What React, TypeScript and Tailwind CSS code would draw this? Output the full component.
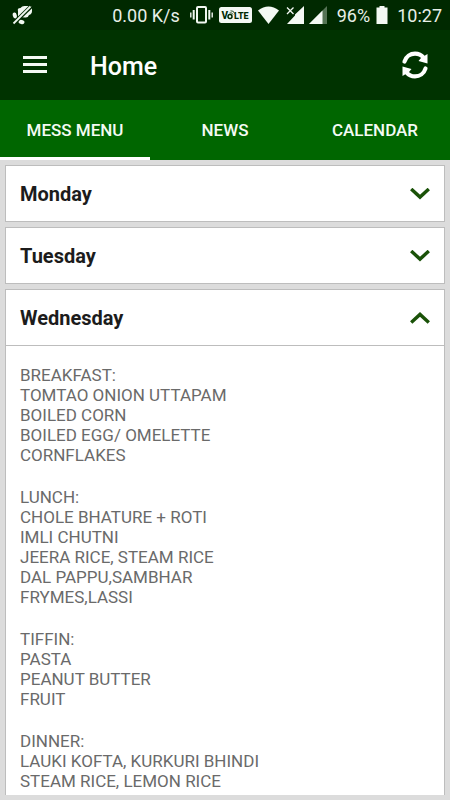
import { useState } from "react";

const tabs = ["MESS MENU", "NEWS", "CALENDAR"];

const meals = [
  { name: "BREAKFAST:", items: ["TOMTAO ONION UTTAPAM", "BOILED CORN", "BOILED EGG/ OMELETTE", "CORNFLAKES"] },
  { name: "LUNCH:", items: ["CHOLE BHATURE + ROTI", "IMLI CHUTNI", "JEERA RICE, STEAM RICE", "DAL PAPPU,SAMBHAR", "FRYMES,LASSI"] },
  { name: "TIFFIN:", items: ["PASTA", "PEANUT BUTTER", "FRUIT"] },
  { name: "DINNER:", items: ["LAUKI KOFTA, KURKURI BHINDI", "STEAM RICE, LEMON RICE"] },
];

const days = ["Monday", "Tuesday", "Wednesday"];

function StatusBar() {
  return (
    <div className="flex h-[30px] shrink-0 items-center bg-[#002900] pr-2 pl-3 text-lg leading-5 text-[#e8efe8]">
      <svg className="h-5 w-[21px]" viewBox="0 0 21 20" fill="#f1f7f1">
        <path d="M6 6Q5 3 8.500 3Q10 .8 13 1H20V6Q20 9 17 10Q16 13 13 12.500L6 12Z" />
        <ellipse cx="2.800" cy="10.500" rx="2" ry="3" transform="rotate(-15 2.800 10.500)" />
        <ellipse cx="9.500" cy="17" rx="3" ry="2" transform="rotate(15 9.500 17)" />
        <path d="M1 19 19.500 1" stroke="#002900" strokeWidth="4" />
        <path d="M1.500 18.500 18.500 1.500" stroke="#f1f7f1" strokeWidth="1.800" />
      </svg>
      <span className="ml-auto pt-px">0.00 K/s</span>
      <svg className="ml-[10px] h-5 w-[23px]" viewBox="0 0 23 20" fill="none" stroke="#f1f7f1">
        <rect x="7" y="2" width="9" height="15.500" rx="1" strokeWidth="2" />
        <path d="M3.700 5v9.500M19.300 5v9.500" strokeWidth="2" />
        <path d="M.8 7.500v5M22.200 7.500v5" strokeWidth="1.400" />
      </svg>
      <svg className="ml-[6px] h-5 w-[33px]" viewBox="0 0 33 20">
        <rect y="2" width="33" height="16" rx="2.500" fill="#f4f9f4" />
        <text x="2.500" y="14" fontFamily="Roboto, sans-serif" fontSize="10" fontWeight="800" fill="#002900">V</text>
        <circle cx="11" cy="11.500" r="2" fill="none" stroke="#002900" strokeWidth="1.500" />
        <path d="M10.500 8Q13 7 14 9.500M11.500 5.800Q15 5.500 15.500 8.500" fill="none" stroke="#002900" strokeWidth=".8" />
        <text x="15" y="14" fontFamily="Roboto, sans-serif" fontSize="9" fontWeight="800" fill="#002900">LTE</text>
      </svg>
      <svg className="ml-[6px] h-5 w-[21px]" viewBox="0 0 21 20" fill="#f4f9f4">
        <path d="M0 5.500Q10.500-2.500 21 5.500L10.500 19Z" />
      </svg>
      <svg className="ml-[7px] h-5 w-[18px]" viewBox="0 0 18 20" fill="#f4f9f4">
        <path d="M18 1V19H1L9 10.500V9.500Z" />
        <path d="M1 2.500 7.500 9M7.500 2.500 1 9" stroke="#f4f9f4" strokeWidth="1.300" />
      </svg>
      <svg className="ml-[5px] h-5 w-[18px]" viewBox="0 0 18 20">
        <path d="M18 1V19H0Z" fill="#557355" />
        <path d="M13.500 5.500V19H0Z" fill="#f4f9f4" />
      </svg>
      <span className="ml-[10px] pt-px">96%</span>
      <svg className="ml-[6px] h-5 w-3" viewBox="0 0 12 20" fill="#f4f9f4">
        <path d="M3.500 1H8.500V2.500H11.500V19H.5V2.500H3.500Z" />
      </svg>
      <span className="ml-[9px] pt-px">10:27</span>
    </div>
  );
}

function Chevron({ up }: { up: boolean }) {
  return (
    <svg className="h-3 w-5" viewBox="0 0 20 12" fill="none" stroke="#1a5208" strokeWidth="3.400">
      <path d={up ? "M1.200 10.500 10 2.400 18.800 10.500" : "M1.200 1 10 9.100 18.800 1"} />
    </svg>
  );
}

export default function App() {
  const [tab, setTab] = useState(0);
  const [open, setOpen] = useState(2);

  return (
    <div className="flex h-screen flex-col overflow-hidden bg-[#dcdcdc] font-[Roboto,sans-serif]">
      <StatusBar />
      <header className="flex h-[70px] shrink-0 items-center bg-[#003300] pr-5 pl-[23px] text-white">
        <button aria-label="Open menu">
          <svg className="h-[18px] w-6" viewBox="0 0 24 18" fill="#f4f9f4">
            <path d="M0 0H24V3H0ZM0 7H24V10H0ZM0 14H24V17H0Z" />
          </svg>
        </button>
        <h1 className="ml-[43px] pt-1 text-[25px] leading-8 font-medium">Home</h1>
        <button className="ml-auto" aria-label="Refresh">
          <svg className="h-[30px] w-[30px]" viewBox="0 0 30 30" fill="none" stroke="#fff" strokeWidth="4.200">
            <path d="M4.500 11.500C6 6.500 10.500 3.600 15 3.600C18.500 3.600 21.500 5 23.500 7.500" strokeLinecap="round" />
            <path d="M25.500 18.500C24 23.500 19.500 26.400 15 26.400C11.500 26.400 8.500 25 6.500 22.500" strokeLinecap="round" />
            <path d="M27.500 4V13.500L18.500 11L21 8ZM2.500 26V16.500L11.500 19L9 22Z" fill="#fff" stroke="none" />
          </svg>
        </button>
      </header>
      <nav className="grid h-[60px] shrink-0 grid-cols-3 bg-[#006600]" role="tablist">
        {tabs.map((label, i) => (
          <button
            key={label}
            role="tab"
            aria-selected={tab === i}
            onClick={() => setTab(i)}
            className={`border-b-3 pt-1 text-[17px] font-medium text-[#f4fbf4] ${tab === i ? "border-b-white" : "border-b-transparent"}`}
          >
            {label}
          </button>
        ))}
      </nav>
      <main className="flex min-h-0 flex-1 flex-col gap-[5px] p-[5px]">
        {days.map((day, i) => (
          <section
            key={day}
            className={`border border-[#bdbdbd] bg-white ${open === i ? "min-h-0 flex-1 overflow-hidden border-b-0" : "shrink-0"}`}
          >
            <h2>
              <button
                aria-expanded={open === i}
                onClick={() => setOpen(open === i ? -1 : i)}
                className="flex h-[55px] w-full items-center justify-between pr-[14px] pl-[14px] text-xl font-bold text-[#1c1c1c]"
              >
                {day}
                <Chevron up={open === i} />
              </button>
            </h2>
            {open === i && (
              <div className="flex flex-col gap-[22px] border-t border-[#bdbdbd] px-[14px] pt-[19px] text-[17px] leading-5 text-[#6a6a6a]">
                {meals.map((meal) => (
                  <div key={meal.name}>
                    <h3>{meal.name}</h3>
                    {meal.items.map((item) => (
                      <p key={item}>{item}</p>
                    ))}
                  </div>
                ))}
              </div>
            )}
          </section>
        ))}
      </main>
    </div>
  );
}
